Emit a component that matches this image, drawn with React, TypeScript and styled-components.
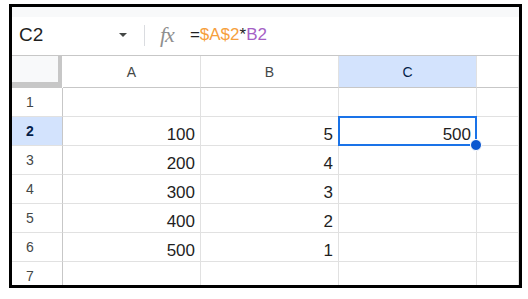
import { createGlobalStyle } from "styled-components";
import styled from "styled-components";

const GlobalStyle = createGlobalStyle`
  body {
    margin: 0;
    background: #ffffff;
    font-family: "Liberation Sans", Arial, sans-serif;
  }
`;

const Frame = styled.div`
  box-sizing: border-box;
  margin: 4px 0 0 9px;
  width: 513px;
  height: 284px;
  border: 3px solid #000;
  overflow: hidden;
  display: flex;
  flex-direction: column;
  background: #fff;
  & > * {
    flex-shrink: 0;
  }
`;

const TopStrip = styled.div`
  height: 10px;
  background: #f8f9fa;
`;

const FormulaBar = styled.div`
  box-sizing: border-box;
  height: 39px;
  border-bottom: 1px solid #c7c7c7;
  display: flex;
  align-items: center;
  padding-bottom: 2px;
`;

const NameBox = styled.div`
  width: 100px;
  padding-left: 7px;
  font-size: 19px;
  color: #1f1f1f;
`;

const Caret = styled.div`
  width: 0;
  height: 0;
  border-left: 4px solid transparent;
  border-right: 4px solid transparent;
  border-top: 4px solid #444746;
  margin-right: 17px;
`;

const Divider = styled.div`
  width: 1px;
  height: 21px;
  background: #dadce0;
  margin-right: 15px;
`;

const Fx = styled.span`
  font-family: "Liberation Serif", serif;
  font-style: italic;
  font-size: 22px;
  color: #8f8f8f;
  margin-right: 16px;
  letter-spacing: -1px;
`;

const Formula = styled.div`
  font-size: 17px;
  color: #1f1f1f;
`;

const Ref = styled.span<{ $color: string }>`
  color: ${(p) => p.$color};
`;

const Grid = styled.div`
  display: grid;
  grid-template-columns: 51px 138px 138px 138px 1fr;
  grid-template-rows: 32px repeat(7, 29px);
`;

const Corner = styled.div`
  box-sizing: border-box;
  background: #f8f9fa;
  border-right: 4px solid #c7c7c7;
  border-bottom: 6px solid #c7c7c7;
  margin-right: 1px;
`;

const ColHead = styled.div<{ $active?: boolean }>`
  box-sizing: border-box;
  border-right: 1px solid #e1e1e1;
  border-bottom: 1px solid #c7c7c7;
  background: ${(p) => (p.$active ? "#d3e3fd" : "#fff")};
  color: ${(p) => (p.$active ? "#041e49" : "#444746")};
  font-size: 14px;
  display: flex;
  align-items: center;
  justify-content: center;
  padding-top: 1px;
`;

const RowHead = styled.div<{ $active?: boolean }>`
  box-sizing: border-box;
  border-right: 1px solid #c7c7c7;
  border-bottom: 1px solid #e1e1e1;
  background: ${(p) => (p.$active ? "#d3e3fd" : "#fff")};
  color: ${(p) => (p.$active ? "#041e49" : "#444746")};
  font-weight: ${(p) => (p.$active ? 700 : 400)};
  font-size: 14px;
  display: flex;
  align-items: center;
  padding-left: 14px;
`;

const Cell = styled.div`
  position: relative;
  box-sizing: border-box;
  border-right: 1px solid #e1e1e1;
  border-bottom: 1px solid #e1e1e1;
  font-size: 17px;
  color: #1f1f1f;
  display: flex;
  align-items: flex-end;
  justify-content: flex-end;
  padding: 0 5px 2px 0;
  line-height: 1;
`;

const Selection = styled.div`
  position: absolute;
  z-index: 2;
  left: -1px;
  top: -1px;
  width: 139px;
  height: 30px;
  box-sizing: border-box;
  border: 2px solid #1a73e8;
  pointer-events: none;
`;

const Handle = styled.div`
  position: absolute;
  right: -7px;
  bottom: -7px;
  width: 12px;
  height: 12px;
  border-radius: 50%;
  background: #0b57d0;
  box-sizing: border-box;
  border: 1px solid #fff;
`;

const data: [string, string][] = [
  ["", ""],
  ["100", "5"],
  ["200", "4"],
  ["300", "3"],
  ["400", "2"],
  ["500", "1"],
  ["", ""],
];

export default function App() {
  return (
    <>
      <GlobalStyle />
      <Frame>
        <TopStrip />
        <FormulaBar>
          <NameBox>C2</NameBox>
          <Caret />
          <Divider />
          <Fx>fx</Fx>
          <Formula>
            =<Ref $color="#f6a03c">$A$2</Ref>*<Ref $color="#a55fc5">B2</Ref>
          </Formula>
        </FormulaBar>
        <Grid>
          <Corner />
          <ColHead>A</ColHead>
          <ColHead>B</ColHead>
          <ColHead $active>C</ColHead>
          <ColHead />
          {data.map(([a, b], i) => {
            const row = i + 1;
            const active = row === 2;
            return [
              <RowHead key={`h${row}`} $active={active}>
                {row}
              </RowHead>,
              <Cell key={`a${row}`}>{a}</Cell>,
              <Cell key={`b${row}`}>{b}</Cell>,
              <Cell key={`c${row}`}>
                {active ? "500" : ""}
                {active && (
                  <Selection>
                    <Handle />
                  </Selection>
                )}
              </Cell>,
              <Cell key={`d${row}`} />,
            ];
          })}
        </Grid>
      </Frame>
    </>
  );
}
